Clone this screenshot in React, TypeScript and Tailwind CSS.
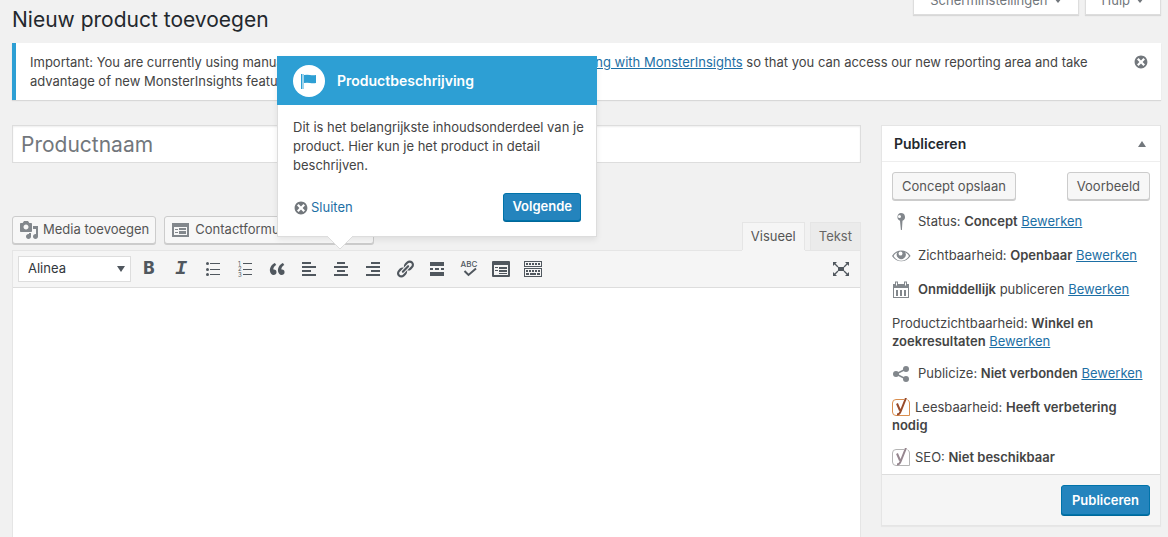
import { ReactNode, useState } from 'react';

interface IconProps {
  children: ReactNode;
  className?: string;
}

function Icon({ children, className = 'size-5' }: IconProps) {
  return (
    <svg viewBox="0 0 20 20" fill="currentColor" aria-hidden="true" className={className}>
      {children}
    </svg>
  );
}

function DismissIcon({ className }: { className?: string }) {
  return (
    <Icon className={className}>
      <path d="M10 2c4.42 0 8 3.58 8 8s-3.58 8-8 8-8-3.58-8-8 3.58-8 8-8zm5 11l-3-3 3-3-2-2-3 3-3-3-2 2 3 3-3 3 2 2 3-3 3 3z" />
    </Icon>
  );
}

function YoastIcon({ border, letter }: { border: string; letter: string }) {
  return (
    <svg viewBox="0 0 18 18" aria-hidden="true" className="mr-[5px] inline-block size-[18px] align-top">
      <path
        d="M12 1.500H4A3.500 3.500 0 0 0 .5 5v9A3.500 3.500 0 0 0 4 17.500H17.500V5A3.500 3.500 0 0 0 15.500 1.800"
        fill="none"
        stroke={border}
      />
      <path d="M5 5.500l3 7M14 0L8.600 13.500q-1 3-3.600 3" fill="none" stroke={letter} strokeWidth="2" />
    </svg>
  );
}

const tools: { label: string; icon: ReactNode }[] = [
  { label: 'Vet', icon: <span className="text-[17px] font-extrabold">B</span> },
  {
    label: 'Cursief',
    icon: <span className="font-['Liberation_Mono',monospace] text-xl font-bold italic">I</span>,
  },
  {
    label: 'Ongenummerde lijst',
    icon: (
      <Icon>
        <path d="M7 4h10v1H7zM7 10h10v1H7zM7 15h10v1H7z" />
        <circle cx="4.500" cy="4.500" r="1.500" />
        <circle cx="4.500" cy="10.500" r="1.500" />
        <circle cx="4.500" cy="15.500" r="1.500" />
      </Icon>
    ),
  },
  {
    label: 'Genummerde lijst',
    icon: (
      <Icon>
        <path d="M8 4h9v1H8zM8 10h9v1H8zM8 15h9v1H8z" />
        <text x="3" y="7" fontSize="6">1</text>
        <text x="3" y="12" fontSize="6">2</text>
        <text x="3" y="18" fontSize="6">3</text>
      </Icon>
    ),
  },
  {
    label: 'Citaat',
    icon: (
      <Icon>
        <path d="M9.490 13.220c0-.74-.2-1.380-.61-1.900-.62-.78-1.830-.88-2.530-.72-.29-1.650 1.110-3.750 2.920-4.650L7.880 4c-2.730 1.300-5.420 4.280-4.960 8.050C3.210 14.430 4.590 16 6.540 16c.85 0 1.560-.25 2.120-.75s.83-1.180.83-2.030zm8.050 0c0-.74-.2-1.380-.61-1.900-.63-.78-1.830-.88-2.530-.72-.29-1.650 1.110-3.750 2.920-4.650L15.930 4c-2.730 1.300-5.410 4.280-4.950 8.050.29 2.380 1.660 3.950 3.610 3.950.85 0 1.560-.25 2.120-.75s.83-1.180.83-2.030z" />
      </Icon>
    ),
  },
  {
    label: 'Links uitlijnen',
    icon: <Icon><path d="M3 3h9v2H3zM3 7h14v2H3zM3 11h9v2H3zM3 15h14v2H3z" /></Icon>,
  },
  {
    label: 'Centreren',
    icon: <Icon><path d="M6 3h8v2H6zM3 7h14v2H3zM6 11h8v2H6zM3 15h14v2H3z" /></Icon>,
  },
  {
    label: 'Rechts uitlijnen',
    icon: <Icon><path d="M8 3h9v2H8zM3 7h14v2H3zM8 11h9v2H8zM3 15h14v2H3z" /></Icon>,
  },
  {
    label: 'Link invoegen',
    icon: (
      <Icon>
        <path d="M17.740 2.760c1.680 1.690 1.680 4.410 0 6.100l-1.530 1.520c-1.120 1.120-2.700 1.470-4.140 1.090l2.620-2.610.76-.77.76-.76c.84-.84.84-2.200 0-3.040-.84-.85-2.200-.85-3.040 0l-.77.76-3.380 3.380c-.37-1.440-.02-3.020 1.100-4.140l1.520-1.530c1.690-1.680 4.420-1.680 6.100 0zM8.590 13.430l5.340-5.340c.42-.42.42-1.100 0-1.520-.44-.43-1.130-.39-1.530 0l-5.330 5.340c-.42.42-.42 1.100 0 1.520.44.43 1.130.39 1.520 0zm-.76 2.290l4.140-4.150c.38 1.440.03 3.020-1.090 4.140l-1.520 1.530c-1.690 1.680-4.410 1.680-6.100 0-1.680-1.680-1.680-4.420 0-6.100l1.530-1.520c1.120-1.120 2.700-1.470 4.140-1.100l-4.140 4.150c-.85.84-.85 2.200 0 3.050.84.84 2.200.84 3.040 0z" />
      </Icon>
    ),
  },
  {
    label: 'Lees meer',
    icon: <Icon><path d="M3 3h14v4H3zM3 9h3v2H3zM8 9h4v2H8zM14 9h3v2h-3zM3 13h14v4H3z" /></Icon>,
  },
  {
    label: 'Spellingcontrole',
    icon: (
      <Icon className="size-5 overflow-visible">
        <text x="10" y="8" fontSize="8" fontWeight="500" textAnchor="middle">ABC</text>
        <path d="M5.500 12l4 4 7.500-6.500" fill="none" stroke="currentColor" strokeWidth="2" />
      </Icon>
    ),
  },
  {
    label: 'Contactformulier',
    icon: (
      <Icon>
        <path d="M2 2h16a1 1 0 0 1 1 1v14a1 1 0 0 1-1 1H2a1 1 0 0 1-1-1V3a1 1 0 0 1 1-1zm1 4v10h14V6z" fillRule="evenodd" />
        <path d="M4 8h3v1H4zM4 11h3v1H4zM8 8h8v2H8zM8 11h8v2H8zM8 14h8v1H8z" />
      </Icon>
    ),
  },
  {
    label: 'Werkbalk tonen',
    icon: (
      <Icon>
        <path d="M1 2h18v6H1zm1 1v4h16V3zM1 9h18v9H1zm1 1v7h16v-7z" fillRule="evenodd" />
        <path d="M3 4h2v2H3zM6 4h2v2H6zM9 4h2v2H9zM12 4h2v2h-2zM15 4h2v2h-2zM3 11h2v2H3zM6 11h2v2H6zM9 11h2v2H9zM12 11h2v2h-2zM15 11h2v2h-2zM3 14h3v2H3zM7 14h6v2H7zM14 14h3v2h-3z" />
      </Icon>
    ),
  },
];

const secondaryButton =
  'flex h-7 items-center rounded-[3px] border border-[#ccc] bg-[#f7f7f7] text-[#555] shadow-[0_1px_0_#ccc]';
const primaryButton =
  'rounded-[3px] border border-[#0073aa] bg-[#2484bd] font-semibold text-white shadow-[0_1px_0_#006799]';

function ScreenTab({ children }: { children: ReactNode }) {
  return (
    <button className="flex h-7 items-center gap-1.5 border border-t-0 border-[#ddd] bg-white px-4 text-[#72777c] shadow-[0_1px_1px_#0000001a]">
      {children}
      <svg viewBox="0 0 8 5" fill="currentColor" aria-hidden="true" className="h-[5px] w-2">
        <path d="M0 0h8L4 5z" />
      </svg>
    </button>
  );
}

function EditLink() {
  return <a href="#edit" className="text-[#1d6fa5] underline">Bewerken</a>;
}

function PublishRow({ icon, children }: { icon?: ReactNode; children: ReactNode }) {
  return (
    <div className="px-2.5 pt-1.5 pb-2">
      {icon && <Icon className="mr-1.5 inline-block size-5 align-top text-[#82878c]">{icon}</Icon>}
      {children}
    </div>
  );
}

function PublishBox() {
  return (
    <aside className="w-[280px] shrink-0 border border-[#e5e5e5] bg-white leading-[18px] shadow-[0_1px_1px_#0000000a]">
      <div className="flex h-9 items-center justify-between border-b border-[#eee] px-3">
        <h2 className="text-sm font-semibold text-[#23282d]">Publiceren</h2>
        <button aria-label="Paneel inklappen" className="px-0.5 text-[#72777c]">
          <svg viewBox="0 0 8 6" fill="currentColor" className="h-1.5 w-2">
            <path d="M4 0l4 6H0z" />
          </svg>
        </button>
      </div>
      <div className="flex justify-between p-2.5 pb-1.5">
        <button className={`${secondaryButton} px-[9px]`}>Concept opslaan</button>
        <button className={`${secondaryButton} px-[9px]`}>Voorbeeld</button>
      </div>
      <PublishRow
        icon={
          <path d="M9 1a4 4 0 0 1 1.500 7.700L9.900 18h-1L8 8.700A4 4 0 0 1 9 1zM7.500 3a1.500 1.500 0 1 0 1.500 1.500A1.500 1.500 0 0 0 7.500 3z" fillRule="evenodd" />
        }
      >
        Status: <b className="font-semibold">Concept</b> <EditLink />
      </PublishRow>
      <PublishRow
        icon={
          <path d="M18.300 9.500C14 2.900 4.500 2.900 0 10c4.500 7 14 7 18.500 0zM9.200 14.800C6 14.800 3.300 13 1.500 10c1-1.700 2.400-3 4-3.800a4.500 4.500 0 1 0 7.500 0c1.600.8 3 2.100 4 3.800-1.800 3-4.600 4.800-7.800 4.800zM8.500 5.500a2 2 0 1 1-2 2 2 2 0 0 1 2-2z" fillRule="evenodd" />
        }
      >
        Zichtbaarheid: <b className="font-semibold">Openbaar</b> <EditLink />
      </PublishRow>
      <PublishRow
        icon={
          <path d="M1 4h2V1.500h3V4h6V1.500h3V4h2v14H1zm1 4v9h14V8zm2 2h2v6H4zm4 0h2v6H8zm4 0h2v6h-2zM4 2.500v3h1v-3zm9 0v3h1v-3z" fillRule="evenodd" />
        }
      >
        <b className="font-semibold">Onmiddellijk</b> publiceren <EditLink />
      </PublishRow>
      <PublishRow>
        Productzichtbaarheid: <b className="font-semibold">Winkel en zoekresultaten</b> <EditLink />
      </PublishRow>
      <PublishRow
        icon={
          <>
            <circle cx="4" cy="10" r="3" />
            <circle cx="14" cy="5" r="3" />
            <circle cx="14" cy="15" r="3" />
            <path d="M14 5L4 10l10 5" fill="none" stroke="currentColor" strokeWidth="1.500" />
          </>
        }
      >
        Publicize: <b className="font-semibold">Niet verbonden</b> <EditLink />
      </PublishRow>
      <PublishRow>
        <YoastIcon border="#d98e4f" letter="#984b2b" />
        Leesbaarheid: <b className="font-semibold">Heeft verbetering nodig</b>
      </PublishRow>
      <PublishRow>
        <YoastIcon border="#b5b5b5" letter="#96868f" />
        SEO: <b className="font-semibold">Niet beschikbaar</b>
      </PublishRow>
      <div className="flex justify-end border-t border-[#ddd] bg-[#f5f5f5] p-2.5">
        <button className={`${primaryButton} h-[30px] px-2.5`}>Publiceren</button>
      </div>
    </aside>
  );
}

function ProductPointer({ onClose }: { onClose: () => void }) {
  return (
    <div
      role="dialog"
      aria-labelledby="pointer-title"
      className="absolute top-14 left-[277px] z-10 w-80 border border-t-0 border-[#ddd] bg-white shadow-[0_3px_6px_#00000013]"
    >
      <div className="-mx-px flex h-[49px] items-center gap-3 bg-[#2d9fd4] px-4 text-white">
        <span className="flex size-8 items-center justify-center rounded-full bg-white text-[#2d9fd4]">
          <Icon>
            <path d="M2 3h1v15H2z" />
            <path d="M3 3h2v15H3z" opacity=".45" />
            <path d="M5 4q3-.4 6 0t6 0v8q-3 .4-6 0t-6 0z" />
          </Icon>
        </span>
        <h3 id="pointer-title" className="text-sm font-semibold">Productbeschrijving</h3>
      </div>
      <p className="pt-[13px] pr-2 pl-[15px] leading-[19px]">
        Dit is het belangrijkste inhoudsonderdeel van je product. Hier kun je het product in detail
        beschrijven.
      </p>
      <div className="flex items-center justify-between px-[15px] pt-[18px] pb-[15px]">
        <button onClick={onClose} className="flex items-center gap-0.5 pt-0.5 text-[#1d6fa5]">
          <DismissIcon className="size-4 text-[#72777c]" />
          Sluiten
        </button>
        <button className={`${primaryButton} h-7 px-2`}>Volgende</button>
      </div>
      <svg viewBox="0 0 26 13" aria-hidden="true" className="absolute top-full left-[49px] h-[13px] w-[26px]">
        <path d="M0 0l13 13L26 0" fill="#fff" stroke="#ddd" />
        <path d="M1 0h24" stroke="#fff" strokeWidth="2" />
      </svg>
    </div>
  );
}

export default function App() {
  const [pointerOpen, setPointerOpen] = useState(true);
  const [tab, setTab] = useState('Visueel');

  return (
    <div className="relative flex min-h-screen flex-col overflow-hidden bg-[#f1f1f1] pr-[7px] pl-3 font-[Inter,'Liberation_Sans',sans-serif] text-[13px] text-[#444]">
      <header className="flex justify-between">
        <h1 className="pt-1.5 text-[21px] leading-7 text-[#23282d]">Nieuw product toevoegen</h1>
        <div className="flex h-[15px] items-end gap-1.5">
          <ScreenTab>Scherminstellingen</ScreenTab>
          <ScreenTab>Hulp</ScreenTab>
        </div>
      </header>

      <div className="mt-[9px] flex items-start justify-between gap-6 border-l-4 border-[#2d9fd4] bg-white pt-2.5 pr-3 pb-[9px] pl-3.5 leading-[19px] shadow-[0_1px_1px_#0000001a]">
        <p>
          Important: You are currently using manual UA code output. We also recommend{' '}
          <a href="#authenticate" className="text-[#1d6fa5] underline">authenticating with MonsterInsights</a>{' '}
          so that you can access our new reporting area and take advantage of new MonsterInsights
          features.
        </p>
        <button aria-label="Melding sluiten" className="pt-px text-[#72777c]">
          <DismissIcon className="size-4" />
        </button>
      </div>

      <div className="mt-[25px] flex flex-1 items-start gap-5">
        <main className="flex min-w-0 flex-1 flex-col self-stretch">
          <input
            type="text"
            aria-label="Productnaam"
            placeholder="Productnaam"
            className="h-[38px] w-full border border-[#ddd] bg-white px-2 text-[21px] shadow-[inset_0_1px_2px_#00000012] placeholder:text-[#72777c]"
          />

          <div className="mt-[53px] flex items-start gap-2">
            <button className={`${secondaryButton} gap-1 px-1.5`}>
              <Icon className="size-5 text-[#82878c]">
                <path d="M13 11V4c0-.55-.45-1-1-1h-1.670L9 1H5L3.670 3H2c-.55 0-1 .45-1 1v7c0 .55.45 1 1 1h10c.55 0 1-.45 1-1zM7 4.500c1.380 0 2.500 1.120 2.500 2.500S8.380 9.500 7 9.500 4.500 8.380 4.500 7 5.620 4.500 7 4.500zM14 6h5v10.500c0 1.380-1.120 2.500-2.500 2.500S14 17.880 14 16.500s1.120-2.500 2.500-2.500c.17 0 .34.02.5.05V9h-3V6zm-4 8.050V13h2v3.500c0 1.380-1.120 2.500-2.500 2.500S7 17.880 7 16.500 8.120 14 9.500 14c.17 0 .34.02.5.05z" />
              </Icon>
              Media toevoegen
            </button>
            <button className={`${secondaryButton} gap-1 px-1.5`}>
              <Icon className="size-5 text-[#82878c]">
                <path d="M1 3h17v14H1zm2 4v8h13V7z" fillRule="evenodd" />
                <path d="M4 9h3v1H4zM4 12h3v1H4zM8 8h7v2H8zM8 11h7v3H8z" />
              </Icon>
              Contactformulier toevoegen
            </button>
            <div role="tablist" className="z-[1] ml-auto flex gap-[5px] self-end pt-1.5">
              {['Visueel', 'Tekst'].map(name => (
                <button
                  key={name}
                  role="tab"
                  aria-selected={tab === name}
                  onClick={() => setTab(name)}
                  className={`h-7 border border-b-0 border-[#e5e5e5] px-2 ${
                    tab === name
                      ? 'bg-[#f5f5f5] text-[#555] shadow-[0_1px_0_#f5f5f5]'
                      : 'bg-[#ebebeb] text-[#666]'
                  }`}
                >
                  {name}
                </button>
              ))}
            </div>
          </div>

          <div className="flex flex-1 flex-col border border-b-0 border-[#e5e5e5] bg-white">
            <div className="flex h-[37px] items-center border-b border-[#ddd] bg-[#f5f5f5] px-[5px]">
              <div className="relative mr-1">
                <select
                  aria-label="Tekststijl"
                  className="h-[26px] w-[113px] appearance-none border border-[#ddd] bg-white px-[9px] text-[#32373c]"
                >
                  <option>Alinea</option>
                  <option>Kop 1</option>
                  <option>Kop 2</option>
                </select>
                <svg viewBox="0 0 8 6" fill="#50575e" aria-hidden="true" className="pointer-events-none absolute top-2.5 right-1.5 h-1.5 w-2">
                  <path d="M0 0h8L4 6z" />
                </svg>
              </div>
              <div className="flex gap-1 text-[#50575e]">
                {tools.map(tool => (
                  <button key={tool.label} aria-label={tool.label} className="flex size-7 items-center justify-center">
                    {tool.icon}
                  </button>
                ))}
              </div>
              <button aria-label="Volledig scherm" className="ml-auto flex size-7 items-center justify-center text-[#50575e]">
                <Icon>
                  <path d="M7 8h6v4H7zM2 3h4L2 7zM18 3v4l-4-4zM2 17v-4l4 4zM18 17h-4l4-4z" />
                  <path d="M3 4l4 4M17 4l-4 4M3 16l4-4M17 16l-4-4" stroke="currentColor" strokeWidth="1.300" />
                </Icon>
              </button>
            </div>
            <textarea aria-label="Productbeschrijving" className="flex-1 resize-none p-2.5 outline-none" />
          </div>
        </main>

        <PublishBox />
      </div>

      {pointerOpen && <ProductPointer onClose={() => setPointerOpen(false)} />}
    </div>
  );
}
